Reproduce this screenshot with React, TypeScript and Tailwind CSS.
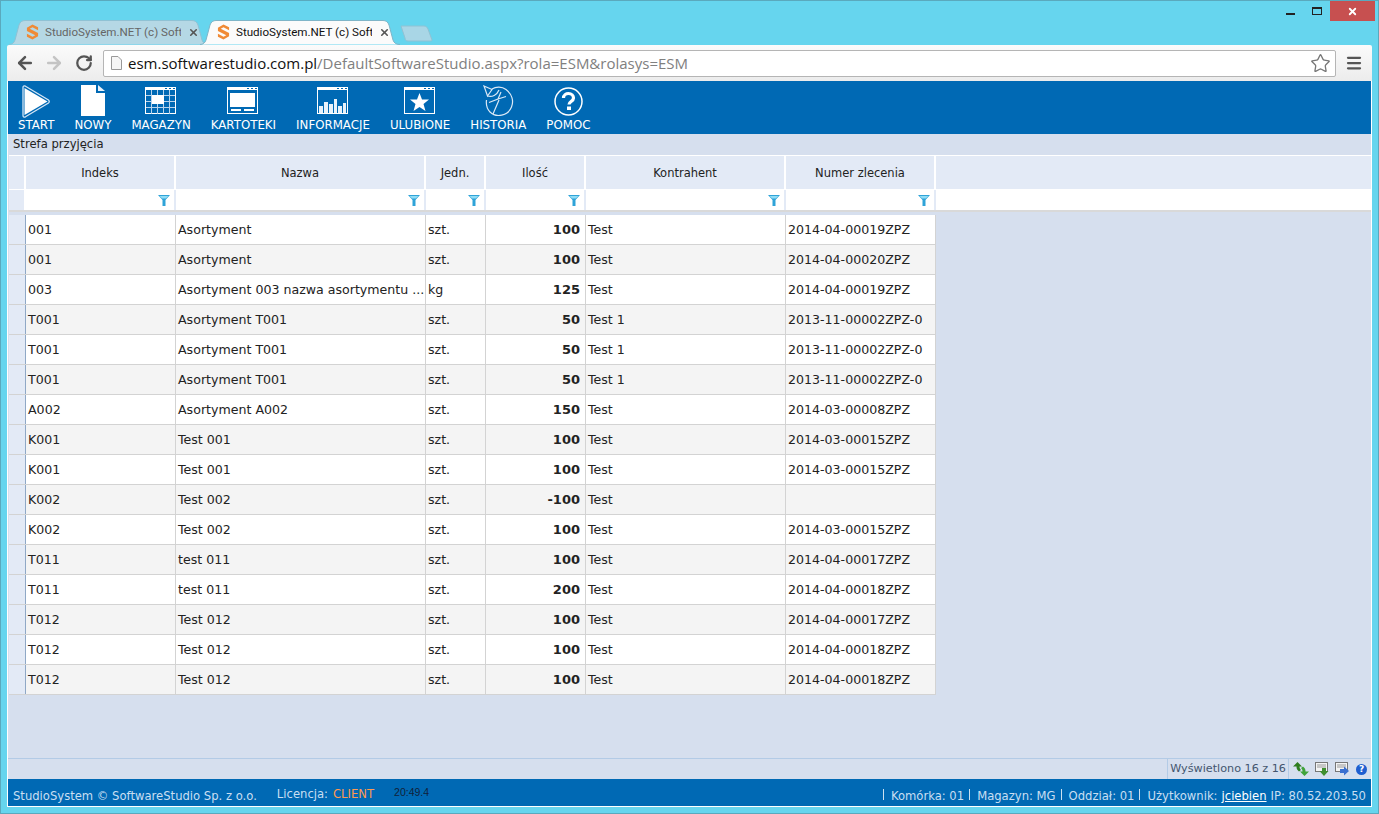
import { RotateCw, ArrowLeft, ArrowRight, Star, X, Menu } from 'lucide-react'

const rows = [
  ['001', 'Asortyment', 'szt.', '100', 'Test', '2014-04-00019ZPZ'],
  ['001', 'Asortyment', 'szt.', '100', 'Test', '2014-04-00020ZPZ'],
  ['003', 'Asortyment 003 nazwa asortymentu ...', 'kg', '125', 'Test', '2014-04-00019ZPZ'],
  ['T001', 'Asortyment T001', 'szt.', '50', 'Test 1', '2013-11-00002ZPZ-0'],
  ['T001', 'Asortyment T001', 'szt.', '50', 'Test 1', '2013-11-00002ZPZ-0'],
  ['T001', 'Asortyment T001', 'szt.', '50', 'Test 1', '2013-11-00002ZPZ-0'],
  ['A002', 'Asortyment A002', 'szt.', '150', 'Test', '2014-03-00008ZPZ'],
  ['K001', 'Test 001', 'szt.', '100', 'Test', '2014-03-00015ZPZ'],
  ['K001', 'Test 001', 'szt.', '100', 'Test', '2014-03-00015ZPZ'],
  ['K002', 'Test 002', 'szt.', '-100', 'Test', ''],
  ['K002', 'Test 002', 'szt.', '100', 'Test', '2014-03-00015ZPZ'],
  ['T011', 'test 011', 'szt.', '100', 'Test', '2014-04-00017ZPZ'],
  ['T011', 'test 011', 'szt.', '200', 'Test', '2014-04-00018ZPZ'],
  ['T012', 'Test 012', 'szt.', '100', 'Test', '2014-04-00017ZPZ'],
  ['T012', 'Test 012', 'szt.', '100', 'Test', '2014-04-00018ZPZ'],
  ['T012', 'Test 012', 'szt.', '100', 'Test', '2014-04-00018ZPZ'],
]

const columns = [
  { title: 'Indeks', width: 'w-[150px]' },
  { title: 'Nazwa', width: 'w-[250px]' },
  { title: 'Jedn.', width: 'w-[60px]' },
  { title: 'Ilość', width: 'w-[100px]' },
  { title: 'Kontrahent', width: 'w-[200px]' },
  { title: 'Numer zlecenia', width: 'w-[150px]' },
]

function Favicon() {
  return (
    <svg width="13" height="16" viewBox="0 0 14 17" className="shrink-0">
      <path d="M7 0.5 13 3.5V6.5L7 3.5 4 5 13 9.5V13L7 16.5 1 13.5V10.5L7 13.5 10 12 1 7.5V4Z" fill="#f08a35" />
    </svg>
  )
}

function Tab({ active }: { active?: boolean }) {
  return (
    <div className="relative h-[25px] w-[200px] -mr-[9px] shrink-0 flex items-center pl-[17px] pr-[10px]">
      <svg className="absolute inset-0 w-full h-full" viewBox="0 0 200 25" preserveAspectRatio="none">
        <path
          d="M0 24.5C3 24.5 5 23 6 20L10 5C11 2 13 .5 16 .5H183C186 .5 188 2 189 5L193 20C194 23 196 24.500 200 24.500"
          fill={active ? '#fbfbfb' : '#b5d8e5'}
          stroke={active ? '#7fb5c8' : '#8fc2d4'}
        />
      </svg>
      <div className="relative flex items-center gap-[6px] w-full">
        <Favicon />
        <span className={`flex-1 overflow-hidden whitespace-nowrap text-[11.6px] font-['Roboto',sans-serif] ${active ? 'text-[#111]' : 'text-[#666]'}`}>
          StudioSystem.NET (c) Soft
        </span>
        <X size={11} strokeWidth={3.5} className="text-[#555] shrink-0 ml-[1px]" />
      </div>
    </div>
  )
}

function StartIcon() {
  return (
    <svg width="28" height="33" viewBox="0 0 28 33">
      <path d="M2.500 3 25.500 16.500 2.500 30Z" fill="#fff" />
      <path d="M1 2.500C1 1 2 .5 3.500 1.200L26.500 15C27.500 15.800 27.500 17.200 26.500 18L3.500 31.800C2 32.500 1 32 1 30.500Z" fill="none" stroke="#d5e6f5" strokeWidth="1.300" />
    </svg>
  )
}

function NewIcon() {
  return (
    <svg width="24" height="32" viewBox="0 0 24 32">
      <path d="M0 0H15V8H24V31H0Z" fill="#fff" />
      <path d="M17 0 24 6H17Z" fill="#e8f1fa" />
    </svg>
  )
}

function WindowFrame({ children }: { children: React.ReactNode }) {
  return (
    <svg width="32" height="28" viewBox="0 0 32 28">
      <rect x=".5" y=".5" width="30" height="26" fill="none" stroke="#fff" />
      <rect x="0" y="0" width="31" height="3" fill="#fff" />
      <rect x="20" y="1" width="2" height="1" fill="#0069b4" />
      <rect x="24" y="1" width="2" height="1" fill="#0069b4" />
      <rect x="28" y="1" width="2" height="1" fill="#0069b4" />
      {children}
    </svg>
  )
}

function MagazynIcon() {
  return (
    <WindowFrame>
      <g stroke="#b9d4ec">
        <path d="M1 8.500H30M1 14.500H30M1 20.500H30M6.500 3V27M12.500 3V27M18.500 3V27M24.500 3V27" />
      </g>
      <rect x="7" y="8" width="12" height="9" fill="#fff" />
    </WindowFrame>
  )
}

function KartotekiIcon() {
  return (
    <WindowFrame>
      <rect x="3" y="6" width="25" height="14" fill="#fff" />
      <rect x="4" y="22" width="10" height="2" fill="#fff" />
      <rect x="17" y="22" width="10" height="2" fill="#fff" />
    </WindowFrame>
  )
}

function InformacjeIcon() {
  return (
    <WindowFrame>
      <path d="M2 26V19H6V26ZM7 26V15H11V26ZM12 26V17H16V26ZM17 26V12H20V26ZM21 26V19H25V26ZM26 26V16H29V26Z" fill="#e9f2fa" />
    </WindowFrame>
  )
}

function UlubioneIcon() {
  return (
    <WindowFrame>
      <path d="M15.500 6 18 12.500H25L19.500 17 21.500 24 15.500 20 9.500 24 11.500 17 6 12.500H13Z" fill="#fff" />
    </WindowFrame>
  )
}

function HistoriaIcon() {
  return (
    <svg width="31" height="32" viewBox="0 0 31 32" fill="none" stroke="#dbe9f6" strokeWidth="1.200">
      <path d="M9 4C13 1.500 19 1.500 23 4.500 29 9 31 16 28.500 22 25 31 13 33 7 27 3.500 23.500 3 19 3.500 15" />
      <path d="M1 1 9 4.500 4.500 11 1 1Z" />
      <path d="M4.500 11C9 12.500 14 10 16 5M18 7 15 14 6 17.500M15 14 23 11.500M16 15 10 29" />
    </svg>
  )
}

function PomocIcon() {
  return (
    <svg width="29" height="29" viewBox="0 0 29 29">
      <circle cx="14.500" cy="14.500" r="13.500" fill="none" stroke="#fff" strokeWidth="1.500" />
      <path d="M9.500 11C9.500 8 12 6.500 14.500 6.500 17.500 6.500 19.500 8.500 19.500 11 19.500 14.500 15 14.500 15 17.500" fill="none" stroke="#fff" strokeWidth="3.200" />
      <rect x="13" y="19.500" width="4" height="3.500" fill="#fff" />
    </svg>
  )
}

function FilterIcon() {
  return (
    <svg width="12" height="11" viewBox="0 0 12 11">
      <path d="M0 0H12L7.500 5V11H4.500V5Z" fill="#2fa3d8" />
      <path d="M1.500 1H10.500L8 3.500H4Z" fill="#8fdcf5" />
    </svg>
  )
}

function NavItem({ icon, label }: { icon: React.ReactNode; label: string }) {
  return (
    <div className="flex flex-col items-center h-full">
      <div className="h-[38px] flex items-center justify-center">{icon}</div>
      <span className="-mt-[1px] text-[11.8px] leading-[13px] text-white whitespace-nowrap">{label}</span>
    </div>
  )
}

function Sep() {
  return <span className="inline-block w-[1px] h-[11px] bg-white/80 ml-[5px] mr-[7px] -translate-y-[2px]" />
}

export default function App() {
  return (
    <div className="relative w-[1379px] h-[814px] overflow-hidden bg-[#66d5ee] border border-[#5aa9bd] font-['DejaVu_Sans',sans-serif] flex flex-col">
      {/* Window buttons */}
      <div className="absolute top-0 right-[3px] flex items-start">
        <div className="w-[9px] h-[2px] bg-[#222] mr-[17px] mt-[12px]" />
        <div className="w-[10px] h-[8px] border border-[#222] border-t-2 mr-[8px] mt-[6px]" />
        <div className="w-[45px] h-[20px] bg-[#c75050] flex items-center justify-center">
          <X size={11} strokeWidth={4} className="text-white" />
        </div>
      </div>

      {/* Tabs */}
      <div className="h-[44px] flex items-end pl-[8px] shrink-0 font-['Open_Sans',sans-serif]">
        <Tab />
        <Tab active />
        <svg width="33" height="17" viewBox="0 0 33 17" className="mb-[3px] ml-[9px]">
          <path d="M1 1H24C26 1 27 2 28 4L32 15C32 16 31 16 30 16H8C6 16 5 15 5 13Z" fill="#a9d6e6" stroke="#8fc2d4" />
        </svg>
      </div>

      {/* Browser toolbar */}
      <div className="mx-[6px] h-[36px] shrink-0 bg-gradient-to-b from-[#fbfbfb] to-[#ececec] rounded-t-[2px] flex items-center pl-[8px] pr-[9px] font-['Open_Sans',sans-serif]">
        <ArrowLeft size={20} strokeWidth={3} className="text-[#555]" />
        <ArrowRight size={20} strokeWidth={3} className="text-[#c4c4c4] ml-[9px]" />
        <RotateCw size={18} strokeWidth={3} className="text-[#555] ml-[11px]" />
        <div className="ml-[10px] flex-1 h-[27px] bg-white border border-[#b5b5b5] rounded-[2px] flex items-center pl-[7px] pr-[4px]">
          <svg width="11" height="14" viewBox="0 0 11 14" className="shrink-0">
            <path d="M.5.500H7L10.500 4V13.500H.5Z" fill="#f6f6f6" stroke="#999" />
          </svg>
          <span className="ml-[6px] flex-1 text-[15px] text-[#111] whitespace-nowrap">
            esm.softwarestudio.com.pl<span className="text-[#808080]">/DefaultSoftwareStudio.aspx?rola=ESM&amp;rolasys=ESM</span>
          </span>
          <Star size={21} strokeWidth={1.5} className="text-[#777]" />
        </div>
        <Menu size={18} strokeWidth={3} className="text-[#555] ml-[9px]" />
      </div>

      {/* App */}
      <div className="mx-[6px] mb-[6px] flex-1 flex flex-col bg-[#d6dfee] border-x border-b border-white min-h-0">
        <div className="h-[53px] shrink-0 bg-[#0069b4] flex gap-[20px] pl-[10px] pt-[1px]">
          <NavItem icon={<StartIcon />} label="START" />
          <NavItem icon={<NewIcon />} label="NOWY" />
          <NavItem icon={<MagazynIcon />} label="MAGAZYN" />
          <NavItem icon={<KartotekiIcon />} label="KARTOTEKI" />
          <NavItem icon={<InformacjeIcon />} label="INFORMACJE" />
          <NavItem icon={<UlubioneIcon />} label="ULUBIONE" />
          <NavItem icon={<HistoriaIcon />} label="HISTORIA" />
          <NavItem icon={<PomocIcon />} label="POMOC" />
        </div>

        <div className="h-[21px] shrink-0 pl-[5px] text-[11.6px] leading-[20px] text-[#222]">Strefa przyjęcia</div>

        {/* Grid header */}
        <div className="flex-1 min-h-0 pl-[1px]">
          <div className="flex h-[35px] border-y border-white bg-[#e3eaf6] text-[11.5px] text-[#222]">
            <div className="w-[17px] shrink-0 border-r-2 border-white" />
            {columns.map((c) => (
              <div key={c.title} className={`${c.width} shrink-0 border-r-2 border-white flex items-center justify-center pt-[3px]`}>
                {c.title}
              </div>
            ))}
            <div className="flex-1" />
          </div>
          <div className="flex h-[22px] bg-white border-b-2 border-[#d9d9d9]">
            <div className="w-[17px] shrink-0 bg-[#e3eaf6] border-r-2 border-white" />
            {columns.map((c) => (
              <div key={c.title} className={`${c.width} shrink-0 border-r-2 border-[#e3eaf6] flex items-center justify-end pr-[4px]`}>
                <FilterIcon />
              </div>
            ))}
          </div>

          {/* Grid rows */}
          <div className="mt-[3px]">
            {rows.map((r, i) => (
              <div key={i} className={`flex h-[30px] items-center text-[12.6px] text-[#222] w-[927px] border-b border-[#d3d3d3] ${i % 2 ? 'bg-[#f4f4f4]' : 'bg-white'}`}>
                <div className="w-[17px] h-full shrink-0 bg-[#e3eaf6] border-r border-[#8fa8c6]" />
                {columns.map((c, j) => (
                  <div
                    key={c.title}
                    className={`${c.width} h-full shrink-0 border-r border-[#d3d3d3] flex items-center pl-[2px] pt-[1px] overflow-hidden whitespace-nowrap ${j === 3 ? 'justify-end pr-[5px] font-bold text-[13px]' : 'pr-[2px]'}`}
                  >
                    {r[j]}
                  </div>
                ))}
              </div>
            ))}
          </div>
        </div>

        {/* Status strip */}
        <div className="h-[21px] shrink-0 border-t border-[#b3cbe6] flex items-center justify-end pr-[4px] text-[11.200px] text-[#44566e]">
          <div className="border-x border-[#b3cbe6] h-full flex items-center px-[2px]">Wyświetlono 16 z 16</div>
          <svg width="16" height="14" viewBox="0 0 16 14" className="ml-[4px]">
            <path d="M4.500 0 9 4.500H6.500C6.500 6 7 7 8 8L6 9.500C4 8 3.500 6.500 3.500 4.500H0Z" fill="#2e7d1e" />
            <path d="M11.500 14 7 9.500H9.500C9.500 8 9 7 8 6L10 4.500C12 6 12.500 7.500 12.500 9.500H16Z" fill="#3fa33a" />
          </svg>
          <svg width="14" height="14" viewBox="0 0 14 14" className="ml-[6px]">
            <rect x=".5" y=".5" width="12" height="9" fill="#f4f4f4" stroke="#777" />
            <path d="M2 3H11M2 5H11" stroke="#999" />
            <path d="M7 6H11V9H13.500L9 14 4.500 9H7Z" fill="#3f8f2f" />
          </svg>
          <svg width="14" height="14" viewBox="0 0 14 14" className="ml-[6px]">
            <rect x=".5" y=".5" width="12" height="9" fill="#f4f4f4" stroke="#777" />
            <path d="M2 3H11M2 5H11" stroke="#999" />
            <path d="M5 7H9V4.500L14 9 9 13.500V11H5Z" fill="#3a6fd0" />
          </svg>
          <div className="ml-[7px] w-[11px] h-[11px] rounded-full bg-[#1f5fd0] text-white text-[9px] leading-[11px] text-center font-bold">?</div>
        </div>

        {/* Footer */}
        <div className="h-[27px] shrink-0 bg-[#0069b4] flex items-center pl-[5px] pr-[5px] text-[11.6px] text-[#c9dff2]">
          <span className="mt-[8px]">StudioSystem © SoftwareStudio Sp. z o.o.</span>
          <span className="ml-[20px] mt-[5px]">Licencja:</span>
          <span className="ml-[5px] mt-[5px] text-[#ff9a50]">CLIENT</span>
          <span className="ml-[20px] mt-[1px] text-[10.500px] text-[#10223a] font-['Liberation_Sans',sans-serif]">20:49.4</span>
          <div className="ml-auto flex items-center whitespace-nowrap mt-[8px]">
            <Sep />
            <span>Komórka: 01</span>
            <Sep />
            <span>Magazyn: MG</span>
            <Sep />
            <span>Oddział: 01</span>
            <Sep />
            <span>Użytkownik:</span>
            <span className="ml-[4px] text-white underline">jciebien</span>
            <span className="ml-[4px]">IP: 80.52.203.50</span>
          </div>
        </div>
      </div>
    </div>
  )
}
